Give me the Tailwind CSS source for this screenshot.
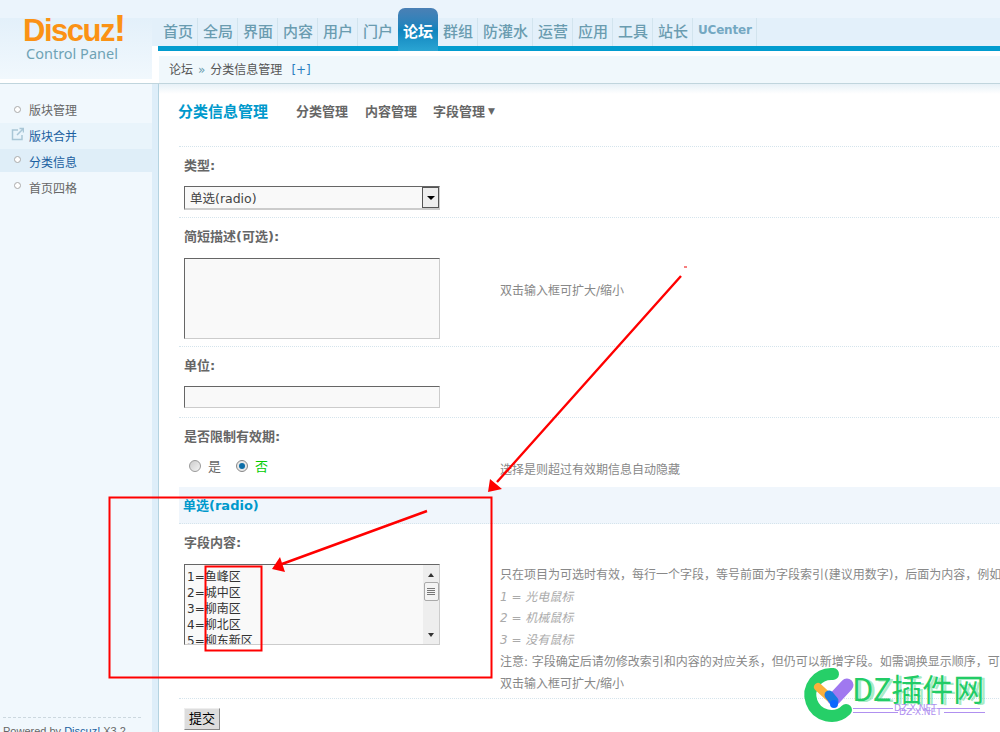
<!DOCTYPE html>
<html lang="zh">
<head>
    <meta charset="UTF-8">
    <title>Discuz! Control Panel</title>
    <script src="https://cdn.jsdelivr.net/npm/@tailwindcss/browser@4"></script>
</head>
<body class="relative w-[1000px] h-[732px] overflow-hidden bg-white text-[12px] leading-[16px] text-[#666] font-['Tahoma','DejaVu_Sans','Noto_Sans_CJK_SC',sans-serif]">

    <!-- header -->
    <div class="flex h-[84px] border-b border-[#c0d5dd]">
        <div class="w-[152px] shrink-0 h-[83px] bg-[linear-gradient(#ebf4fc_18px,#e3f0fa_18px,#f1f8fd_79px)] border-b-[4px] border-white">
            <div class="h-[44px] pl-[23px] pt-[13px] text-[31px] leading-[32px] font-bold tracking-[-1.5px] text-[#fb9214] font-['Liberation_Sans',sans-serif]">Discuz<span class="text-[36px]">!</span></div>
            <div class="pl-[26px] text-[14.5px] leading-[18px] text-[#6fa3b5] font-['Noto_Sans',sans-serif]">Control Panel</div>
        </div>
        <div class="w-[6px] shrink-0 flex flex-col">
            <div class="h-[18px] bg-[#ebf4fc]"></div>
            <div class="h-[28px] bg-[#e3f0fa]"></div>
        </div>
        <div class="flex-1 min-w-0 flex flex-col">
            <div class="h-[18px] bg-[#ebf4fc]"></div>
            <div class="h-[28px] bg-[#e3f0fa] flex text-[#6a9cb0] text-[15px] font-['Noto_Sans_CJK_SC',sans-serif] font-medium">
                <a class="w-[40px] pl-[5px] leading-[25px] border-r border-[#d2e4ee]">首页</a>
                <a class="w-[40px] pl-[5px] leading-[25px] border-r border-[#d2e4ee]">全局</a>
                <a class="w-[40px] pl-[5px] leading-[25px] border-r border-[#d2e4ee]">界面</a>
                <a class="w-[40px] pl-[5px] leading-[25px] border-r border-[#d2e4ee]">内容</a>
                <a class="w-[40px] pl-[5px] leading-[25px] border-r border-[#d2e4ee]">用户</a>
                <a class="w-[40px] pl-[5px] leading-[25px]">门户</a>
                <a class="relative w-[40px] h-[43px] -mt-[10px] rounded-t-[7px] bg-gradient-to-b from-[#4a80b5] via-[#0f83bd] to-[#2aa5d3] text-white text-center leading-[45px] font-bold">论坛</a>
                <a class="w-[40px] pl-[5px] leading-[25px] border-r border-[#d2e4ee]">群组</a>
                <a class="w-[55px] pl-[5px] leading-[25px] border-r border-[#d2e4ee]">防灌水</a>
                <a class="w-[40px] pl-[5px] leading-[25px] border-r border-[#d2e4ee]">运营</a>
                <a class="w-[40px] pl-[5px] leading-[25px] border-r border-[#d2e4ee]">应用</a>
                <a class="w-[40px] pl-[5px] leading-[25px] border-r border-[#d2e4ee]">工具</a>
                <a class="w-[40px] pl-[5px] leading-[25px] border-r border-[#d2e4ee]">站长</a>
                <a class="w-[64px] pl-[5px] leading-[25px] border-r border-[#d2e4ee] text-[12px] font-bold font-['Tahoma','DejaVu_Sans',sans-serif] tracking-[-0.2px] text-[#74a8c2]">UCenter</a>
            </div>
            <div class="h-[5px] bg-[#019ccf]"></div>
            <div class="h-[5px] bg-white"></div>
            <div class="flex-1 ml-px bg-[#f0f8fc] flex items-center pl-[10px] pt-px text-[#555]">
                <span>论坛</span>
                <span class="mx-[5px] text-[#6a9cb0]">»</span>
                <span>分类信息管理</span>
                <span class="ml-[9px] text-[#2a7fc0]">[+]</span>
            </div>
        </div>
    </div>

    <div class="flex h-[648px]">
        <!-- sidebar -->
        <div class="relative w-[152px] shrink-0 bg-[#f1f8fd] pt-[13px] text-[#666]">
            <div class="h-[26px] pl-[29px] pt-[2px] flex items-center relative"><span class="absolute left-[14px] top-[9px] w-[7px] h-[7px] rounded-full border border-[#aaa] bg-white"></span>版块管理</div>
            <div class="h-[26px] pl-[29px] pt-[2px] flex items-center relative bg-[#e9f4fb] text-[#1a5fa0]">
                <svg class="absolute left-[11px] top-[4px]" width="13" height="14" viewBox="0 0 13 14" fill="none" stroke="#a9c6d6" stroke-width="1.5"><path d="M7 3H1.500v9.500H11V8"/><path d="M6 8l6-6M8.500 1.500h4v4"/></svg>
                版块合并</div>
            <div class="h-[23px] pl-[29px] pt-[6px] relative bg-[#dfeef8] text-[#1a5fa0]"><span class="absolute left-[14px] top-[7px] w-[7px] h-[7px] rounded-full border border-[#aaa] bg-white"></span>分类信息</div>
            <div class="h-[32px] pl-[29px] pt-[9px] relative"><span class="absolute left-[14px] top-[10px] w-[7px] h-[7px] rounded-full border border-[#aaa] bg-white"></span>首页四格</div>
            <div class="absolute left-[3px] right-[11px] top-[633px] border-t border-dashed border-[#ccd8df]"></div>
            <div class="absolute left-[3px] top-[639px] whitespace-nowrap text-[11px] font-['Liberation_Sans',sans-serif] text-[#666]">Powered by <span class="text-[#1a5fa0]">Discuz!</span> X3.2</div>
        </div>
        <div class="w-[7px] shrink-0 bg-[#deeef9] border-r border-[#b5d3e0]"></div>

        <!-- main -->
        <div class="flex-1 min-w-0 bg-gradient-to-b from-[#e7f1f7] to-white to-[10px] bg-no-repeat">
            <div class="ml-[20px] w-[900px]">
                <div class="h-[62px] pb-[6px] flex items-center whitespace-nowrap text-[13px] font-bold text-[#666]">
                    <span class="-ml-px mr-px text-[15px] text-[#0099cc] w-[117px]">分类信息管理</span>
                    <span class="w-[69px]">分类管理</span>
                    <span class="w-[68px]">内容管理</span>
                    <span>字段管理</span>
                    <span class="ml-[3px] -mt-[2px] text-[9px]">▼</span>
                </div>

                <!-- 类型 -->
                <div class="h-[71px] border-t border-dotted border-[#d5e4ec] px-[5px]">
                    <div class="h-[36px] pt-[2px] flex items-center font-bold text-[13px]">类型:</div>
                    <div class="mt-[3px] w-[256px] h-[24px] bg-[#f9f9f9] border border-[#666] border-r-[#ccc] border-b-[2px] border-b-[#ccc] flex items-center justify-between text-[#444] pl-[5px]">
                        <span class="pt-[2px] text-[12.5px]">单选(radio)</span>
                        <span class="w-[17px] h-[21px] bg-[#eee] border border-[#555] flex items-center justify-center"><span class="w-0 h-0 border-x-[4px] border-x-transparent border-t-[4px] border-t-black"></span></span>
                    </div>
                </div>

                <!-- 简短描述 -->
                <div class="h-[129px] border-t border-dotted border-[#d5e4ec] px-[5px]">
                    <div class="h-[36px] pt-[2px] flex items-center font-bold text-[13px]">简短描述(可选):</div>
                    <div class="mt-[4px] flex whitespace-nowrap">
                        <div class="w-[256px] h-[81px] bg-[#f9f9f9] border border-[#666] border-r-[#ccc] border-b-[#ccc]"></div>
                        <div class="ml-[60px] mt-[25px] text-[#888]">双击输入框可扩大/缩小</div>
                    </div>
                </div>

                <!-- 单位 -->
                <div class="h-[71px] border-t border-dotted border-[#d5e4ec] px-[5px]">
                    <div class="h-[36px] pt-[2px] flex items-center font-bold text-[13px]">单位:</div>
                    <div class="mt-[3px] w-[256px] h-[22px] bg-[#f9f9f9] border border-[#666] border-r-[#ccc] border-b-[#ccc]"></div>
                </div>

                <!-- 是否限制有效期 -->
                <div class="h-[70px] border-t border-dotted border-[#d5e4ec] px-[5px]">
                    <div class="h-[36px] pt-[2px] flex items-center font-bold text-[13px]">是否限制有效期:</div>
                    <div class="h-[24px] flex items-center whitespace-nowrap">
                        <span class="ml-[5px] w-[12px] h-[12px] rounded-full border border-[#999] bg-gradient-to-br from-[#ccc] to-[#f4f4f4]"></span>
                        <span class="ml-[7px] text-[13px] pt-[2px]">是</span>
                        <span class="ml-[15px] w-[12px] h-[12px] rounded-full border border-[#888] bg-[#e8e8e8] flex items-center justify-center"><span class="w-[6px] h-[6px] rounded-full bg-[#0d6ea8]"></span></span>
                        <span class="ml-[7px] text-[13px] pt-[2px] text-[#00cc00]">否</span>
                        <span class="ml-[232px] mt-[8px] text-[#888]">选择是则超过有效期信息自动隐藏</span>
                    </div>
                </div>

                <!-- 单选(radio) -->
                <div class="h-[37px] bg-[#f0f6fc] border-b border-dotted border-[#d5e4ec] pl-[4px] pt-[1px] flex items-center font-bold text-[13px] text-[#0099cc]">单选(radio)</div>

                <!-- 字段内容 -->
                <div class="h-[175px] border-b border-dotted border-[#d5e4ec] px-[5px]">
                    <div class="h-[36px] pt-[2px] flex items-center font-bold text-[13px]">字段内容:</div>
                    <div class="mt-[4px] flex whitespace-nowrap">
                        <div class="relative w-[256px] h-[81px] bg-[#f9f9f9] border border-[#666] border-r-[#ccc] border-b-[#ccc] overflow-hidden pl-[2px] pt-[4px] text-[#333]">
                            <div>1=鱼峰区</div>
                            <div>2=城中区</div>
                            <div>3=柳南区</div>
                            <div>4=柳北区</div>
                            <div>5=柳东新区</div>
                            <div class="absolute right-0 top-0 bottom-0 w-[16px] bg-[#eee] flex flex-col items-center">
                                <span class="mt-[8px] w-0 h-0 border-x-[3px] border-x-transparent border-b-[4px] border-b-[#333]"></span>
                                <span class="mt-[5px] w-[15px] h-[19px] rounded-[2px] bg-[#f4f4f4] border border-[#aaa] flex flex-col items-center justify-center gap-[1px]">
                                    <span class="w-[8px] h-px bg-[#777]"></span><span class="w-[8px] h-px bg-[#777]"></span><span class="w-[8px] h-px bg-[#777]"></span><span class="w-[8px] h-px bg-[#777]"></span>
                                </span>
                                <span class="mt-[32px] w-0 h-0 border-x-[3px] border-x-transparent border-t-[4px] border-t-[#333]"></span>
                            </div>
                        </div>
                        <div class="ml-[60px] mt-[1px] leading-[21.7px] text-[#888]">
                            <div>只在项目为可选时有效&#65292;每行一个字段&#65292;等号前面为字段索引(建议用数字)&#65292;后面为内容&#65292;例如:</div>
                            <div class="italic text-[#aaa]">1 = 光电鼠标</div>
                            <div class="italic text-[#aaa]">2 = 机械鼠标</div>
                            <div class="italic text-[#aaa]">3 = 没有鼠标</div>
                            <div>注意: 字段确定后请勿修改索引和内容的对应关系&#65292;但仍可以新增字段。如需调换显示顺序&#65292;可以通过变动</div>
                            <div>双击输入框可扩大/缩小</div>
                        </div>
                    </div>
                </div>

                <div class="pl-[5px] pt-[9px]">
                    <button class="w-[36px] h-[22px] bg-[#ddd] border border-[#888] border-l-[#eee] border-t-[#eee] text-black text-[13px]">提交</button>
                </div>
            </div>
        </div>
    </div>

    <!-- red annotations on top of the screenshot -->
    <svg class="absolute left-0 top-0 pointer-events-none" width="1000" height="732" fill="none">
        <rect x="109.500" y="497.500" width="382" height="180" stroke="#f00" stroke-width="2"/>
        <rect x="205.500" y="566.500" width="56" height="84" stroke="#f00" stroke-width="2"/>
        <path d="M427 511L282 564M681 276L497 482" stroke="#f00" stroke-width="2.400"/>
        <path d="M272 569L280 557L285 572Z M488 492L490 479L502 489Z" fill="#f00"/>
        <path d="M684 267h3" stroke="#e00" stroke-width="1"/>
    </svg>

    <!-- watermark, doubled in the reference -->
    <div class="absolute left-[800px] top-[660px] w-[200px] h-[72px]">
        <svg class="absolute left-0 top-0" width="60" height="66" viewBox="0 0 60 66" fill="none">
            <path d="M33 14A21 21 0 1 0 46 50" stroke="#26cf68" stroke-width="12" stroke-linecap="round"/>
            <path d="M18 27L32 40" stroke="#fbb03b" stroke-width="8" stroke-linecap="round"/>
            <path d="M34 39L47 25" stroke="#a078f0" stroke-width="13" stroke-linecap="round"/>
            <path d="M29 35L34 41" stroke="#1a7ae0" stroke-width="9" stroke-linecap="round"/>
            <circle cx="34" cy="44" r="4" fill="#0a66ff"/>
        </svg>
        <div class="absolute left-[52px] top-[8px] whitespace-nowrap text-[31px] leading-[40px] font-['Noto_Sans_CJK_SC',sans-serif] text-[#22cc66]">DZ插件网</div>
        <div class="absolute left-[55px] top-[9px] whitespace-nowrap text-[31px] leading-[40px] font-['Noto_Sans_CJK_SC',sans-serif] text-[#22cc66]/40">DZ插件网</div>
        <div class="absolute left-[53px] top-[48px] w-[40px] h-px bg-[#b090f0]"></div>
        <div class="absolute left-[53px] top-[52px] w-[45px] h-px bg-[#b090f0]"></div>
        <div class="absolute left-[139px] top-[48px] w-[41px] h-px bg-[#b090f0]"></div>
        <div class="absolute left-[144px] top-[52px] w-[41px] h-px bg-[#b090f0]"></div>
        <div class="absolute left-[94px] top-[43px] whitespace-nowrap text-[9px] leading-[10px] text-[#b090f0]">DZ-X.NET</div>
        <div class="absolute left-[99px] top-[47px] whitespace-nowrap text-[9px] leading-[10px] text-[#b090f0]">DZ-X.NET</div>
    </div>
</body>
</html>
